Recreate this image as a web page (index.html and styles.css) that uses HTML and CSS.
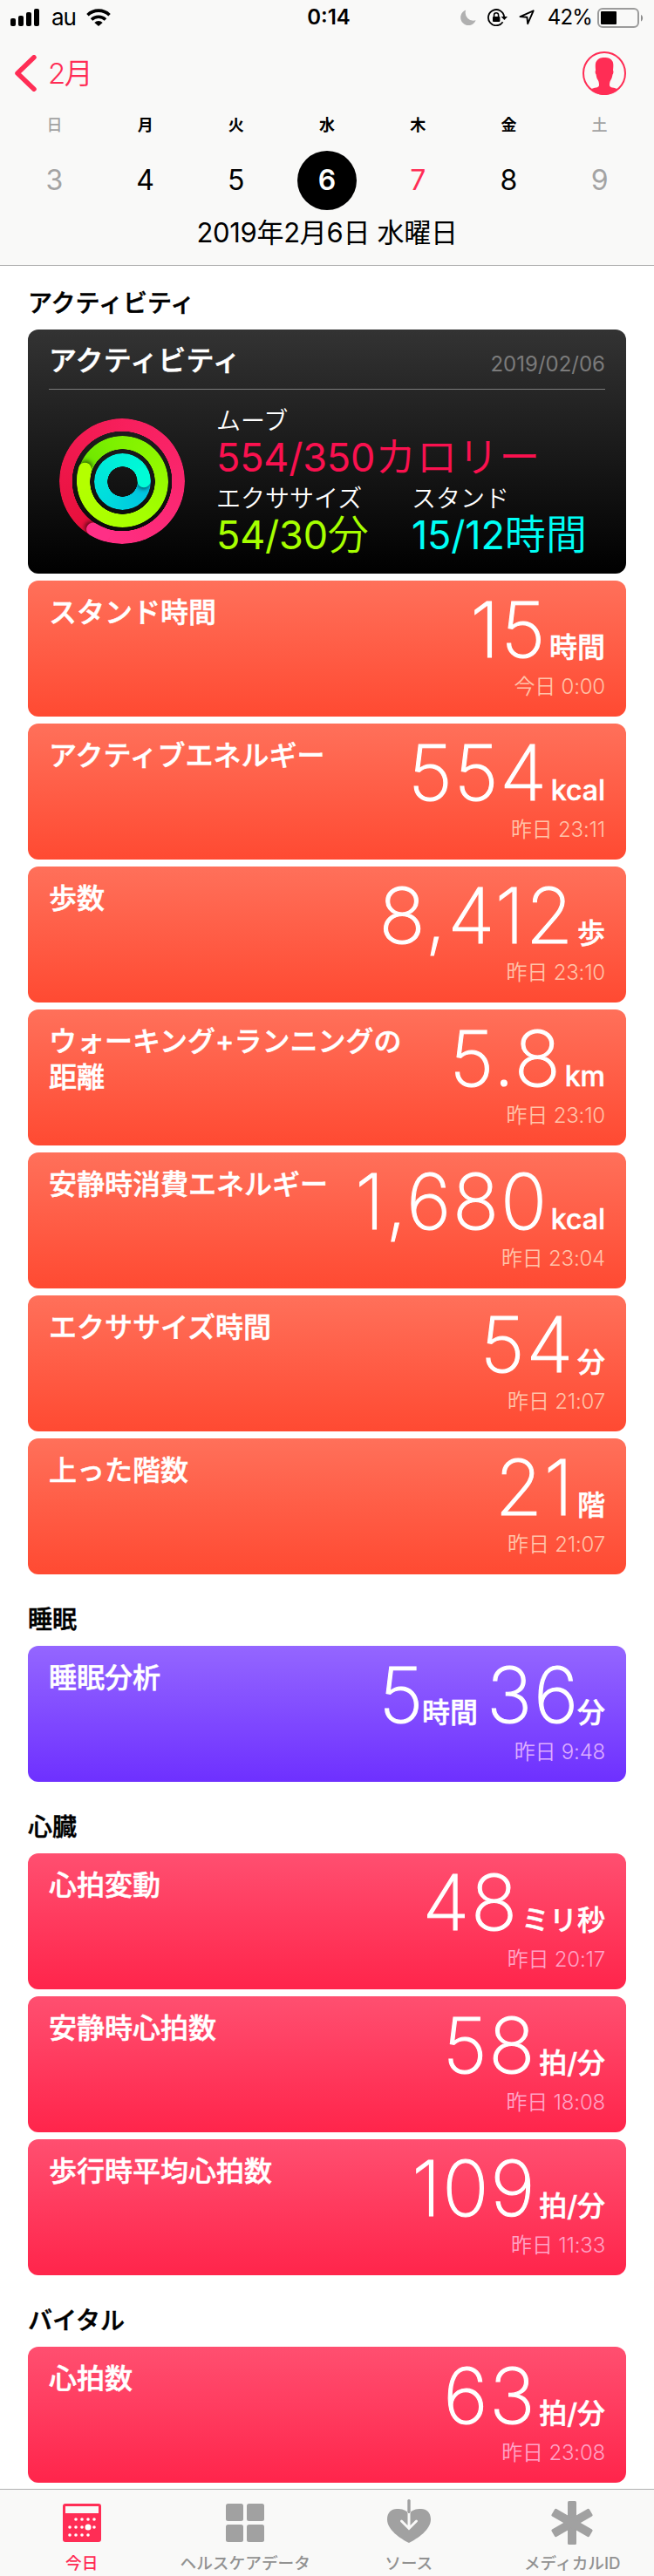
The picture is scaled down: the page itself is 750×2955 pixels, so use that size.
FILE: index.html
```html
<!DOCTYPE html>
<html lang="ja">
<head>
<meta charset="utf-8">
<title>ヘルスケア</title>
<link rel="stylesheet" href="styles.css">
</head>
<body>
<header class="header">
  <div class="status">
    <div class="status-side">
      <svg class="signal" width="33" height="20" viewBox="0 0 33 20"><rect y="11" width="6" height="9" rx="2"/><rect x="9" y="8" width="6" height="12" rx="2"/><rect x="18" y="4" width="6" height="16" rx="2"/><rect x="27" width="6" height="20" rx="2"/></svg>
      <span class="carrier">au</span>
      <svg class="wifi" width="28" height="20" viewBox="0 0 28 20"><path d="M1.5 7.2a18 18 0 0 1 25 0M6 12.500a11.6 11.6 0 0 1 16 0" fill="none" stroke="#000" stroke-width="3.600"/><path d="M9.3 16a6.8 6.8 0 0 1 9.4 0L14 20z"/></svg>
    </div>
    <span class="clock">0:14</span>
    <div class="status-side status-right">
      <svg class="moon" width="18" height="18" viewBox="0 0 18 18"><path d="M6.2.6A9 9 0 1 0 17.6 12.3 9.2 9.2 0 0 1 6.2.6z" fill="#b0b0b0"/></svg>
      <svg class="lock" width="23" height="20" viewBox="0 0 23 20"><path d="M17.6 15.3A9.1 9.1 0 1 1 19.1 9" fill="none" stroke="#000" stroke-width="1.8"/><path d="M15.6 9H23l-3.6 4z"/><rect x="6" y="9" width="8.4" height="6" rx="1"/><path d="M7.6 9.5V7.2a2.5 2.5 0 0 1 5 0v2.3" fill="none" stroke="#000" stroke-width="1.6"/></svg>
      <svg class="locate" width="18" height="18" viewBox="0 0 18 18"><path d="M16.7 1.3 10.2 16.2 9.4 8.7 1.5 8.1z" fill="none" stroke="#000" stroke-width="1.9" stroke-linejoin="round"/></svg>
      <span class="percent">42%</span>
      <svg class="battery" width="54" height="23" viewBox="0 0 54 23"><rect x="1" y="1" width="46" height="21" rx="5" fill="none" stroke="#9b9b9b" stroke-width="2"/><rect x="4" y="4" width="18" height="15" rx="1"/><path d="M50 8c2.8 1 2.8 6.500 0 7.500z" fill="#8d8d8d"/></svg>
    </div>
  </div>
  <div class="nav">
    <div class="back">
      <svg width="26" height="42" viewBox="0 0 26 42"><path d="M22 2.800 3 21l19 18.200" fill="none" stroke="#ff2d55" stroke-width="5.500" stroke-linecap="round" stroke-linejoin="round"/></svg>
      <span>2月</span>
    </div>
    <svg class="avatar" width="50" height="50" viewBox="0 0 50 50"><circle cx="25" cy="25" r="24" fill="none" stroke="#ff2d55" stroke-width="2"/><path d="M9.500 43.500c3.500-2.500 9.500-1 9.500-5 0-2-.3-4-1.200-5.600-1.500-1.700-1.800-3.800-2.200-6.400-1-1.200-1.300-3.500-.5-5-.3-3.500-.6-6.500.2-9C17.600 8 21 7 25.200 7s7.800 1 9.600 5c.9 3 .5 6 .2 9.500.8 1.500.5 3.800-.5 5-.4 2.600-.9 4.700-2.200 6.400-1 1.600-1.300 3.600-1.300 5.600 0 4 6 2.500 9.500 5C36 47.500 31 50 25 50S14 47.500 9.500 43.500z" fill="#ff2d55"/></svg>
  </div>
  <div class="week">
    <div class="day off"><span class="name">日</span><span class="num">3</span></div>
    <div class="day"><span class="name">月</span><span class="num">4</span></div>
    <div class="day"><span class="name">火</span><span class="num">5</span></div>
    <div class="day"><span class="name">水</span><span class="num selected">6</span></div>
    <div class="day"><span class="name">木</span><span class="num today">7</span></div>
    <div class="day"><span class="name">金</span><span class="num">8</span></div>
    <div class="day off"><span class="name">土</span><span class="num">9</span></div>
  </div>
  <div class="date">2019年2月6日 水曜日</div>
</header>

<main class="content">
  <h2 class="section first">アクティビティ</h2>
  <div class="cards">
    <article class="activity">
      <div class="activity-head"><h3 class="title">アクティビティ</h3><span class="activity-date">2019/02/06</span></div>
      <div class="activity-body">
        <div class="rings">
          <div class="ring move"></div>
          <div class="ring exercise"></div>
          <div class="ring stand"></div>
          <svg class="caps" width="144" height="144" viewBox="-72 -72 144 144">
            <defs>
              <filter id="soft" x="-100%" y="-100%" width="300%" height="300%"><feGaussianBlur stdDeviation="2.500"/></filter>
              <mask id="bands" maskUnits="userSpaceOnUse" x="-72" y="-72" width="144" height="144"><g fill="none" stroke="#fff" stroke-width="15"><circle r="64.500"/><circle r="44.800"/><circle r="25"/></g></mask>
            </defs>
            <g mask="url(#bands)"><g fill="#000" fill-opacity=".6" filter="url(#soft)"><circle cx="-36" cy="53" r="7"/><circle cx="-41.500" cy="-16.500" r="7"/><circle cx="24.500" cy="2" r="7"/></g></g>
            <g fill="none" stroke-width="15" stroke-linecap="round">
              <path d="M-21 61A64.500 64.500 0 0 1-33.500 55.100" stroke="#ff2f86"/>
              <path d="M-44.500 2A44.800 44.800 0 0 1-42.600-13.800" stroke="#b4ff00"/>
              <path d="M23.500-8.500A25 25 0 0 1 25-.2" stroke="#00fcd6"/>
            </g>
          </svg>
        </div>
        <div class="stats">
          <div class="stat wide"><span class="stat-name">ムーブ</span><span class="stat-value c-move"><b>554/350</b>カロリー</span></div>
          <div class="stat"><span class="stat-name">エクササイズ</span><span class="stat-value c-exercise"><b>54/30</b>分</span></div>
          <div class="stat"><span class="stat-name">スタンド</span><span class="stat-value c-stand"><b>15/12</b>時間</span></div>
        </div>
      </div>
    </article>
    <article class="card orange"><h3 class="title">スタンド時間</h3><div class="reading"><div class="value">15<span class="unit">時間</span></div><div class="time">今日 0:00</div></div></article>
    <article class="card orange"><h3 class="title">アクティブエネルギー</h3><div class="reading"><div class="value">554<span class="unit">kcal</span></div><div class="time">昨日 23:11</div></div></article>
    <article class="card orange"><h3 class="title">歩数</h3><div class="reading"><div class="value">8,412<span class="unit">歩</span></div><div class="time">昨日 23:10</div></div></article>
    <article class="card orange"><h3 class="title">ウォーキング+ランニングの<br>距離</h3><div class="reading"><div class="value">5.8<span class="unit">km</span></div><div class="time">昨日 23:10</div></div></article>
    <article class="card orange"><h3 class="title">安静時消費エネルギー</h3><div class="reading"><div class="value">1,680<span class="unit">kcal</span></div><div class="time">昨日 23:04</div></div></article>
    <article class="card orange"><h3 class="title">エクササイズ時間</h3><div class="reading"><div class="value">54<span class="unit">分</span></div><div class="time">昨日 21:07</div></div></article>
    <article class="card orange"><h3 class="title">上った階数</h3><div class="reading"><div class="value">21<span class="unit">階</span></div><div class="time">昨日 21:07</div></div></article>
  </div>

  <h2 class="section">睡眠</h2>
  <div class="cards">
    <article class="card purple"><h3 class="title">睡眠分析</h3><div class="reading"><div class="value">5<span class="unit tight">時間</span><span class="second">36</span><span class="unit tight">分</span></div><div class="time">昨日 9:48</div></div></article>
  </div>

  <h2 class="section">心臓</h2>
  <div class="cards">
    <article class="card red"><h3 class="title">心拍変動</h3><div class="reading"><div class="value">48<span class="unit">ミリ秒</span></div><div class="time">昨日 20:17</div></div></article>
    <article class="card red"><h3 class="title">安静時心拍数</h3><div class="reading"><div class="value">58<span class="unit">拍/分</span></div><div class="time">昨日 18:08</div></div></article>
    <article class="card red"><h3 class="title">歩行時平均心拍数</h3><div class="reading"><div class="value">109<span class="unit">拍/分</span></div><div class="time">昨日 11:33</div></div></article>
  </div>

  <h2 class="section">バイタル</h2>
  <div class="cards">
    <article class="card red"><h3 class="title">心拍数</h3><div class="reading"><div class="value">63<span class="unit">拍/分</span></div><div class="time">昨日 23:08</div></div></article>
  </div>
</main>

<nav class="tabs">
  <div class="tab active">
    <svg width="52" height="54" viewBox="-26 -27 52 54"><path fill-rule="evenodd" d="M-19-22h38a3 3 0 0 1 3 3v38a3 3 0 0 1-3 3h-38a3 3 0 0 1-3-3v-38a3 3 0 0 1 3-3zM-19-19v8h38v-8z" fill="currentColor"/><g fill="#fff"><circle cx="-7" cy="-4" r="1.800"/><circle cx="0" cy="-4" r="1.800"/><circle cx="7" cy="-4" r="1.800"/><circle cx="14" cy="-4" r="1.800"/><circle cx="-14" cy="5" r="1.800"/><circle cx="-7" cy="5" r="1.800"/><circle cx="0" cy="5" r="1.800"/><circle cx="7" cy="5" r="3.500"/><circle cx="14" cy="5" r="1.800"/><circle cx="-14" cy="14" r="1.800"/><circle cx="-7" cy="14" r="1.800"/><circle cx="0" cy="14" r="1.800"/><circle cx="7" cy="14" r="1.800"/></g></svg>
    <span>今日</span>
  </div>
  <div class="tab">
    <svg width="52" height="54" viewBox="-26 -27 52 54" fill="#a1a1a1"><rect x="-22" y="-22" width="20" height="20" rx="2.500"/><rect x="2" y="-22" width="20" height="20" rx="2.500"/><rect x="-22" y="2" width="20" height="20" rx="2.500"/><rect x="2" y="2" width="20" height="20" rx="2.500"/></svg>
    <span>ヘルスケアデータ</span>
  </div>
  <div class="tab">
    <svg width="52" height="54" viewBox="-26 -27 52 54"><path d="M0 23C-10 18-25 8-25-4c0-8 5-12 11-12 6 0 11 1 14 6 3-5 8-6 14-6 6 0 11 4 11 12C25 8 10 18 0 23z" fill="#a1a1a1"/><path d="M0-13V5M-8.500-2 0 6.500 8.500-2" fill="none" stroke="#f9f9f8" stroke-width="3" stroke-linecap="round"/><path d="M-2-14h4v3h-4z" fill="#f9f9f8"/><rect x="-1.700" y="-27" width="3.400" height="16" rx="1.500" fill="#a1a1a1"/></svg>
    <span>ソース</span>
  </div>
  <div class="tab">
    <svg width="52" height="54" viewBox="-26 -27 52 54" fill="#a1a1a1"><rect x="-5" y="-25" width="10" height="50" rx="1.500"/><rect x="-5" y="-25" width="10" height="50" rx="1.500" transform="rotate(60)"/><rect x="-5" y="-25" width="10" height="50" rx="1.500" transform="rotate(-60)"/></svg>
    <span>メディカルID</span>
  </div>
</nav>
</body>
</html>
```
FILE: styles.css
```css
* { box-sizing: border-box; }
body {
  margin: 0;
  width: 750px;
  background: #fff;
  color: #000;
  font-family: Inter, "Noto Sans CJK JP", sans-serif;
}
h2, h3 { margin: 0; }
svg { display: block; flex: none; }

.header { height: 305px; background: #f9f9f8; border-bottom: 1px solid #b0b0b0; }
.status { display: grid; grid-template-columns: 1fr auto 1fr; height: 40px; padding: 0 11px 0 12px; align-items: center; }
.status-side { display: flex; align-items: center; }
.carrier { font-size: 26px; line-height: 40px; margin: 0 12px 0 14px; letter-spacing: -1.2px; }
.clock { padding-left: 3px; font-size: 24px; line-height: 40px; font-weight: 600; }
.status-right { justify-content: flex-end; }
.lock { margin-left: 13px; }
.locate { margin-left: 13px; }
.percent { margin-left: 15px; font-size: 24px; line-height: 40px; letter-spacing: -0.8px; }
.battery { margin-left: 6px; }

.nav { display: flex; justify-content: space-between; align-items: center; height: 88px; padding: 0 32px 0 17px; }
.back { display: flex; align-items: center; gap: 12px; color: #ff2d55; font-size: 33px; line-height: 44px; font-weight: 350; letter-spacing: -1.5px; }

.week { display: grid; grid-template-columns: repeat(7, 104.2px); justify-content: center; }
.day { display: flex; flex-direction: column; align-items: center; }
.name { font-size: 18px; line-height: 24px; font-weight: 700; margin-top: 4px; }
.num { width: 68px; height: 68px; margin-top: 17px; border-radius: 50%; font-size: 32px; line-height: 68px; text-align: center; }
.off { color: #a3a3a3; }
.off .name { font-weight: 500; }
.today { color: #ff2d55; }
.selected { background: #000; color: #fff; font-weight: 600; }
.date { margin-top: 6px; text-align: center; font-size: 31px; line-height: 40px; font-weight: 370; letter-spacing: -0.3px; white-space: pre; }

.content { padding: 0 32px; }
.section { font-size: 28px; line-height: 36px; height: 82px; padding-top: 34px; font-weight: 500; -webkit-text-stroke: 0.5px currentColor; }
.first { height: 73px; padding-top: 25px; }
.cards { display: flex; flex-direction: column; gap: 8px; }
.title { font-size: 32px; line-height: 41px; font-weight: 500; -webkit-text-stroke: 0.5px currentColor; white-space: nowrap; }

.activity { height: 280px; padding: 0 24px; border-radius: 12px; background: linear-gradient(#333, #000); color: #fff; }
.activity-head { display: flex; justify-content: space-between; height: 69px; padding-top: 15px; border-bottom: 1px solid #7b7b7b; }
.activity-head .title { letter-spacing: 0.2px; }
.activity-date { padding-top: 5px; font-size: 24px; line-height: 40px; color: #7b7b7b; }
.activity-body { display: flex; padding-left: 12px; }
.rings { display: grid; place-items: center; width: 144px; height: 144px; margin-top: 33px; }
.ring, .caps { grid-area: 1 / 1; }
.caps { z-index: 1; }
.ring { border-radius: 50%; }
.move { width: 144px; height: 144px; background: conic-gradient(from 210deg, #e60f39, #f71f5c 42%, #ff2f86); mask: radial-gradient(circle, transparent 57px, #000 57.5px); }
.exercise { width: 105px; height: 105px; background: conic-gradient(from 288deg, #6be300, #7cf000 15%, #a4ff00 60%, #b6ff00); mask: radial-gradient(circle, transparent 37px, #000 37.5px); }
.stand { width: 65px; height: 65px; background: conic-gradient(from 90deg, #00bde0, #00dbdd 35%, #00f2d8 75%, #00fcd6); mask: radial-gradient(circle, transparent 17px, #000 17.5px); }
.stats { display: grid; grid-template-columns: 224px auto; align-content: start; margin: 19px 0 0 36px; }
.stat { display: flex; flex-direction: column; }
.wide { grid-column: 1 / 3; }
.stat-name { font-size: 28px; line-height: 34px; font-weight: 350; }
.stat-value { font-size: 47px; line-height: 47px; margin-bottom: 7px; font-weight: 350; letter-spacing: 0.4px; white-space: nowrap; }
.stat-value b { font-size: 45px; font-weight: 400; letter-spacing: -0.2px; }
.c-move { color: #fa114f; }
.c-exercise { color: #a6ff00; }
.c-stand { color: #00fff6; }

.card { display: flex; justify-content: space-between; height: 156px; padding: 6px 24px 0; border-radius: 12px; color: #fff; }
.card .title { padding-top: 10px; }
.orange { background: linear-gradient(#ff705a, #ff4a32); --soft: #ffc3a9; }
.purple { background: linear-gradient(#9466ff, #6e30ff); --soft: #dfaeff; }
.red { background: linear-gradient(#ff4f70, #ff254b); --soft: #ffa3c6; }
.reading { text-align: right; white-space: nowrap; }
.value { font-size: 88px; line-height: 100px; font-weight: 200; -webkit-text-stroke: 1.1px currentColor; letter-spacing: 1.7px; }
.unit { margin-left: 3px; font-size: 32px; line-height: 32px; font-weight: 500; -webkit-text-stroke: 0.5px currentColor; letter-spacing: 0; }
.tight { margin-left: -3px; }
.second { margin-left: 10px; }
.time { padding-top: 1px; font-size: 24px; line-height: 30px; font-weight: 350; letter-spacing: -0.2px; color: var(--soft); }

.tabs { display: grid; grid-template-columns: repeat(4, 1fr); height: 100px; margin-top: 7px; padding-top: 11px; background: #f9f9f8; border-top: 1px solid #b0b0b0; }
.tab { display: flex; flex-direction: column; align-items: center; font-size: 18.7px; font-weight: 500; color: #929292; }
.tab span { line-height: 28px; margin-top: 6px; }
.active { color: #ff2d55; }
```
